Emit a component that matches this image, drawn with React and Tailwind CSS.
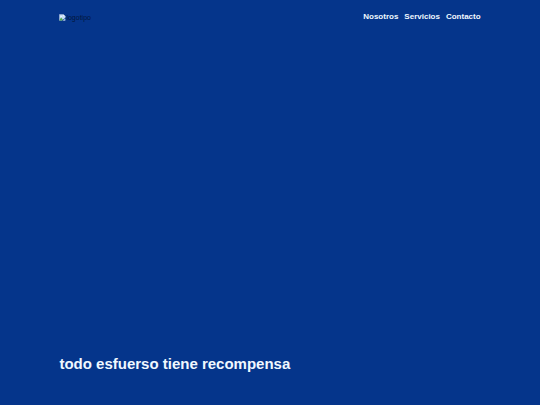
import React from "react";

const links = [
  { label: "Nosotros", href: "#nosotros" },
  { label: "Servicios", href: "#servicios" },
  { label: "Contacto", href: "#contacto" },
];

const Logo = () => (
  <a href="#inicio" className="flex items-center text-[7px] leading-none text-[#03163c]">
    <svg className="w-[7px] h-[7px] shrink-0" viewBox="0 0 16 16" aria-hidden="true">
      <path d="M1 1h9l4 4v4l-7 6H1z" fill="#c4dcf8" />
      <path d="M10 1v4h4z" fill="#ffffff" />
      <path d="M3 6c0-2 4-2 4 0z" fill="#ffffff" />
      <path d="M1 13l4-5 4 5-2 2H1z" fill="#4fa64b" />
      <path d="M14 11v4H9z" fill="#c4dcf8" />
      <path d="M1 15V1h9l4 4v4M14 11v4H9" fill="none" stroke="#b9c8e2" />
    </svg>
    logotipo
  </a>
);

const App = () => {
  return (
    <div className="min-h-screen flex flex-col bg-[#05358b] px-[11%] font-['Liberation_Sans',Arial,sans-serif]">
      <header className="flex items-center justify-between pt-3">
        <Logo />
        <nav className="flex gap-[6px]">
          {links.map((link) => (
            <a key={link.href} href={link.href} className="text-[8px] leading-[10px] font-bold text-[#f0f8ff]">
              {link.label}
            </a>
          ))}
        </nav>
      </header>

      <main className="flex-1 flex items-end pb-[30px]">
        <h1 className="text-[15px] leading-[22px] font-bold text-[#f0f8ff]">todo esfuerso tiene recompensa</h1>
      </main>
    </div>
  );
};

export default App;
